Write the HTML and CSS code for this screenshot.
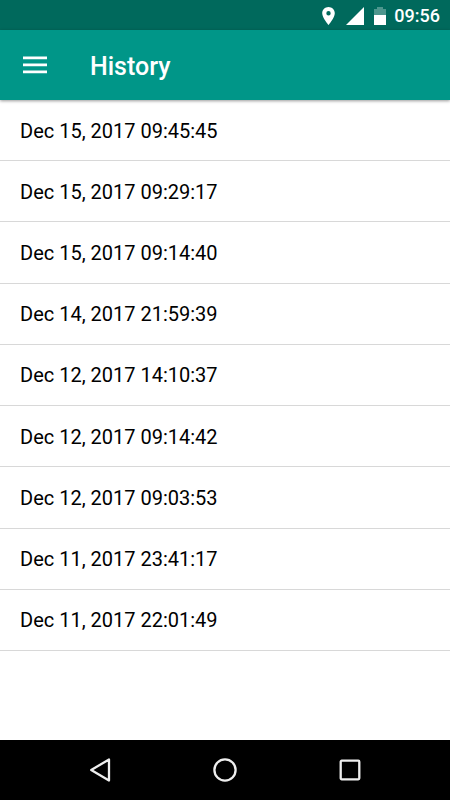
FILE: index.html
```html
<!DOCTYPE html>
<html lang="en">
<head>
<meta charset="utf-8">
<meta name="viewport" content="width=device-width, initial-scale=1">
<title>History</title>
<link rel="stylesheet" href="styles.css">
</head>
<body>
	<div class="status">
		<svg class="pin" width="13" height="18" viewBox="0 0 13 18">
			<path fill="#fff" fill-rule="evenodd" d="M6.500 0C3 0 .2 2.800.2 6.200c0 4.600 6.300 11.800 6.300 11.800s6.300-7.200 6.300-11.800C12.800 2.800 10 0 6.500 0zm0 8.500a2.200 2.200 0 1 1 0-4.400 2.200 2.200 0 0 1 0 4.400z"/>
		</svg>
		<svg class="signal" width="18" height="18" viewBox="0 0 18 18">
			<path fill="#fff" d="M18 0v18H0z"/>
		</svg>
		<svg class="battery" width="12" height="18" viewBox="0 0 12 18">
			<path fill="#fff" fill-opacity=".3" d="M3 0h6v2h3v6H0V2h3z"/>
			<path fill="#fff" d="M0 8h12v10H0z"/>
		</svg>
		<span class="clock">09:56</span>
	</div>

	<header class="toolbar">
		<button class="menu" aria-label="Menu">
			<svg width="24" height="18" viewBox="0 0 24 18">
				<path fill="#fff" d="M0 .5h24v2.700H0zM0 7.500h24v2.700H0zM0 14.500h24v2.700H0z"/>
			</svg>
		</button>
		<h1>History</h1>
	</header>

	<ul class="list">
		<li>Dec 15, 2017 09:45:45</li>
		<li>Dec 15, 2017 09:29:17</li>
		<li>Dec 15, 2017 09:14:40</li>
		<li>Dec 14, 2017 21:59:39</li>
		<li>Dec 12, 2017 14:10:37</li>
		<li>Dec 12, 2017 09:14:42</li>
		<li>Dec 12, 2017 09:03:53</li>
		<li>Dec 11, 2017 23:41:17</li>
		<li>Dec 11, 2017 22:01:49</li>
	</ul>

	<nav class="navbar">
		<button aria-label="Back">
			<svg width="24" height="24" viewBox="0 0 24 24">
				<path fill="none" stroke="#eee" stroke-width="2.300" stroke-linejoin="round" d="M21 1.500v21L3.200 12z"/>
			</svg>
		</button>
		<button aria-label="Home">
			<svg width="24" height="24" viewBox="0 0 24 24">
				<circle cx="12" cy="12" r="10.600" fill="none" stroke="#eee" stroke-width="2.300"/>
			</svg>
		</button>
		<button aria-label="Recent apps">
			<svg width="24" height="24" viewBox="0 0 24 24">
				<rect x="2.700" y="2.700" width="18.600" height="18.600" rx="1" fill="none" stroke="#eee" stroke-width="2.300"/>
			</svg>
		</button>
	</nav>
</body>
</html>
```

FILE: styles.css
```css
* {
	box-sizing: border-box;
}
body {
	display: flex;
	flex-direction: column;
	min-height: 100vh;
	margin: 0;
	background: #fff;
	color: #000;
	font-family: Roboto, sans-serif;
}
button {
	display: flex;
	align-items: center;
	justify-content: center;
	padding: 0;
	border: none;
	background: none;
	cursor: pointer;
}
.status {
	display: flex;
	align-items: center;
	justify-content: flex-end;
	height: 30px;
	padding-top: 1px;
	padding-right: 10px;
	background: #00695c;
}
.signal {
	margin-left: 11px;
}
.battery {
	margin-left: 10px;
}
.clock {
	margin-left: 8px;
	color: #fff;
	font-size: 18px;
	font-weight: 500;
	line-height: 28px;
}
.toolbar {
	display: flex;
	align-items: center;
	height: 70px;
	background: #009688;
	box-shadow: 0 1px 3px rgba(0,0,0,0.4);
}
.menu {
	width: 70px;
	height: 70px;
}
.toolbar h1 {
	margin: 0;
	padding: 3px 0 0 20px;
	color: #fff;
	font-size: 25px;
	font-weight: 500;
	line-height: 30px;
}
.list {
	display: grid;
	grid-auto-rows: 1fr;
	min-height: 551px;
	margin: 0 0 auto;
	padding: 0;
	list-style: none;
}
.list li {
	display: flex;
	align-items: center;
	padding: 1px 20px 0;
	border-bottom: 1px solid #d8d8d8;
	font-size: 20px;
	line-height: 24px;
}
.navbar {
	display: flex;
	justify-content: center;
	height: 60px;
	background: #000;
}
.navbar button {
	width: 125px;
}
```
